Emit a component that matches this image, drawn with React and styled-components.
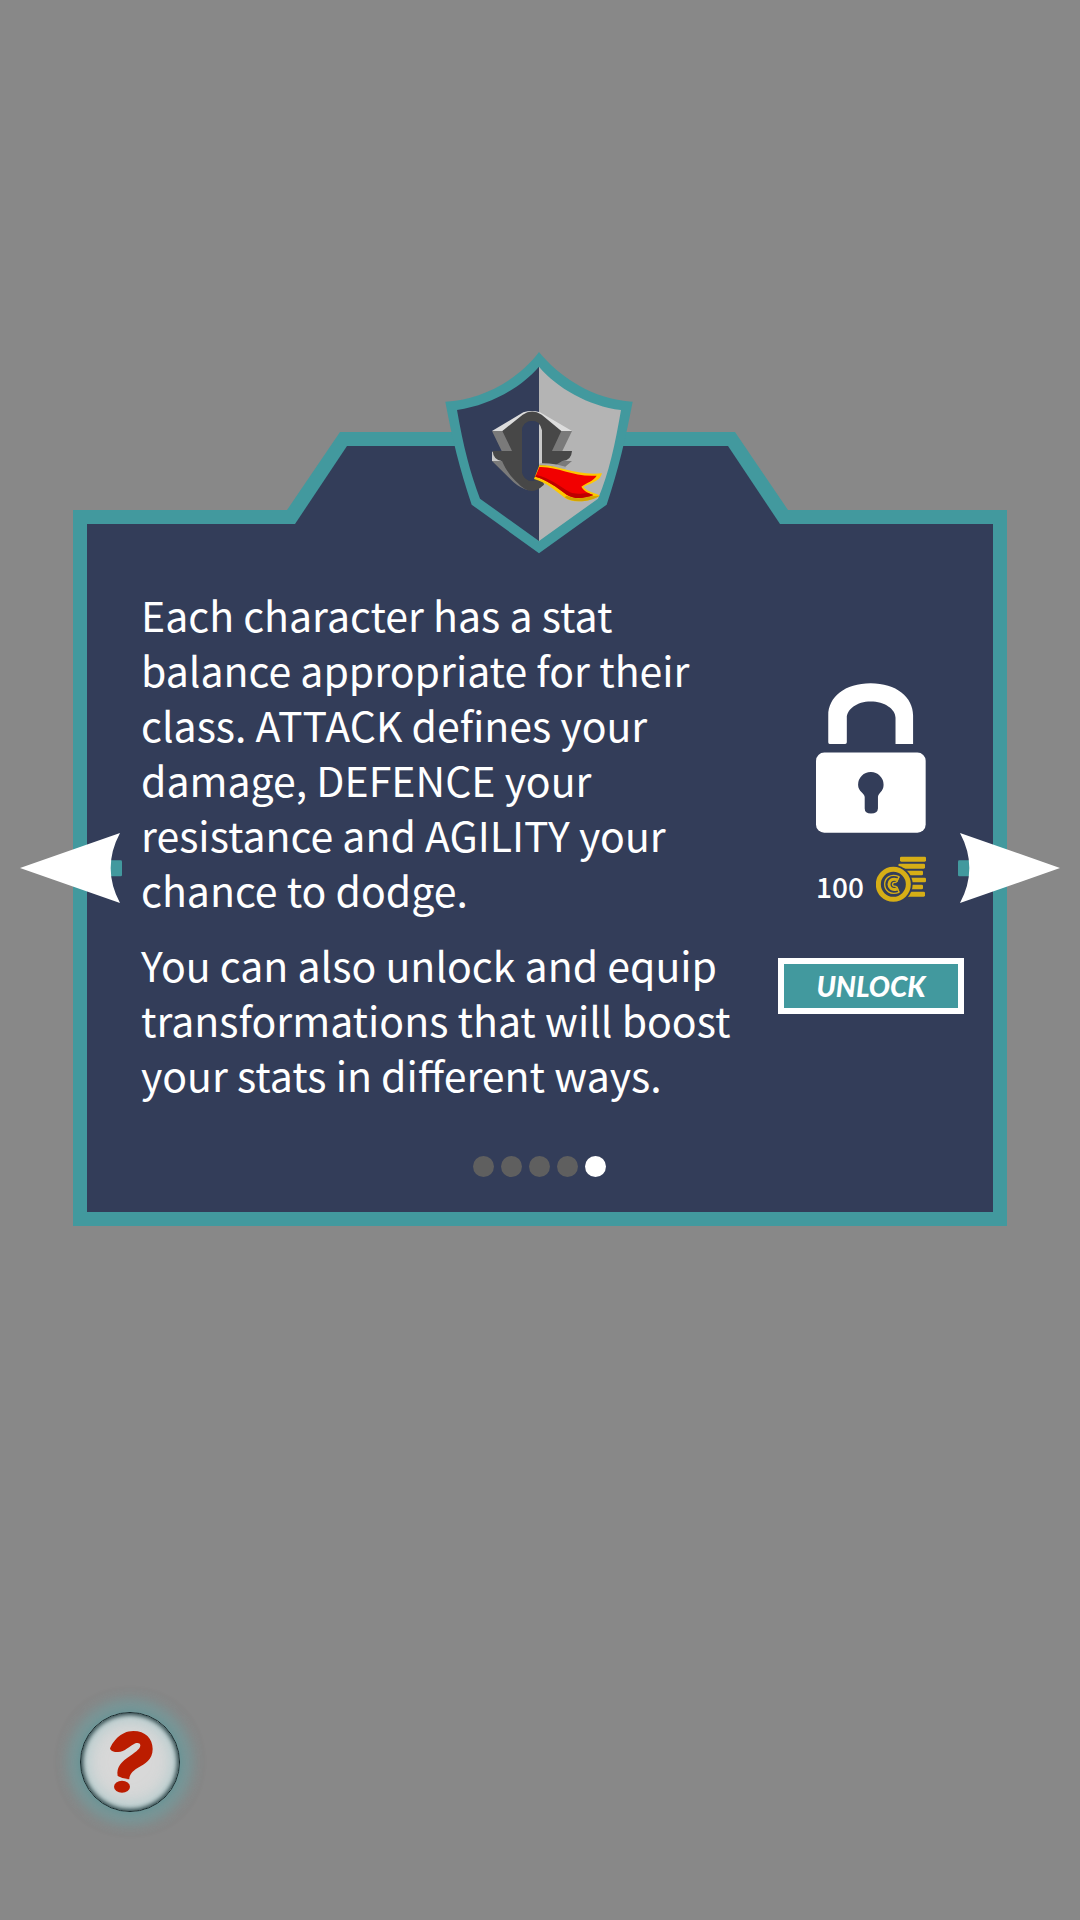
import React from "react";
import styled, { createGlobalStyle } from "styled-components";

const teal = "#42999e";
const navy = "#333d59";
const gold = "#d6ae16";

const GlobalStyle = createGlobalStyle`
  *, *::before, *::after { box-sizing: border-box; }
  body {
    margin: 0;
    background: #888888;
    color: #ffffff;
    font-family: "Noto Sans CJK SC", "Open Sans", sans-serif;
  }
  button {
    padding: 0;
    border: 0;
    background: none;
    color: inherit;
    cursor: pointer;
  }
  svg { display: block; }
`;

const Page = styled.div`
  display: flex;
  flex-direction: column;
  min-height: 100vh;
  padding: 432px 73px 108px;
`;

const Dialog = styled.main`
  display: flex;
  flex-direction: column;
  align-items: center;
`;

const Tab = styled.header`
  position: relative;
  z-index: 1;
  display: grid;
  width: 506px;
  max-width: 100%;
  height: 92px;
  margin-bottom: -14px;
`;

const TabEdge = styled.div`
  grid-area: 1 / 1;
  background: ${teal};
  clip-path: polygon(53px 0, calc(100% - 58px) 0, calc(100% - 5px) 78px, calc(100% - 5px) 100%, 0 100%, 0 78px);
`;

const TabFill = styled.div`
  grid-area: 1 / 1;
  background: ${navy};
  clip-path: polygon(60px 14px, calc(100% - 65px) 14px, calc(100% - 13px) 100%, 8px 100%);
`;

const Shield = styled.svg`
  position: absolute;
  top: -92px;
  left: 50%;
  width: 220px;
  height: 220px;
  transform: translateX(-50%);
`;

const Panel = styled.section`
  position: relative;
  display: flex;
  flex-direction: column;
  gap: 54px;
  width: 100%;
  padding: 63px 29px 35px 54px;
  border: 14px solid ${teal};
  background: ${navy};
`;

const Content = styled.div`
  display: grid;
  grid-template-columns: 1fr 186px;
  gap: 34px;
  align-items: start;
`;

const Copy = styled.div`
  display: flex;
  flex-direction: column;
  gap: 20px;
  font-size: 41px;
  line-height: 55px;
`;

const Paragraph = styled.p`
  margin: 0;
`;

const Offer = styled.aside`
  display: flex;
  flex-direction: column;
  align-items: center;
  padding-top: 96px;
`;

const Price = styled.div`
  display: flex;
  align-items: flex-end;
  gap: 12px;
  height: 46px;
  margin: 23px 0 56px;
  font-size: 28px;
  line-height: 32px;
  font-weight: 500;
`;

const UnlockButton = styled.button`
  width: 100%;
  height: 56px;
  border: 6px solid #ffffff;
  background: ${teal};
  font: italic 900 28px/44px Lato, sans-serif;
`;

const Dots = styled.nav`
  display: flex;
  justify-content: center;
  gap: 7px;
  padding-right: 27px;
`;

const Dot = styled.button`
  width: 21px;
  height: 21px;
  border-radius: 50%;
  background: ${(p) => (p.$active ? "#ffffff" : "#5f5f5f")};
`;

const ArrowButton = styled.button`
  position: absolute;
  top: 50%;
  ${(p) => (p.$next ? "right: -67px;" : "left: -67px;")}
  transform: translateY(-50%) ${(p) => (p.$next ? "scaleX(-1)" : "")};
`;

const Footer = styled.footer`
  display: flex;
  margin-top: auto;
  padding-left: 7px;
`;

const HelpButton = styled.button`
  display: grid;
  place-items: center;
  width: 100px;
  height: 100px;
  border: 1px solid #14282b;
  border-radius: 50%;
  background: #d8d8d8;
  box-shadow:
    0 0 12px 13px rgba(145, 160, 160, 0.5),
    0 0 14px 9px rgba(66, 145, 150, 0.75),
    0 0 5px 1px rgba(30, 90, 94, 0.6),
    inset 0 0 4px 2px rgba(16, 40, 44, 0.8),
    inset 0 0 18px 5px rgba(140, 190, 194, 0.6);
`;

function ShieldEmblem() {
  return (
    <Shield viewBox="0 0 660 660" aria-hidden="true">
      <path fill={teal} d="M327 36C385 107 485 178 608 185C588 290 565 390 530 494L327 640L125 494C90 390 65 290 46 185C150 180 260 125 327 36Z" />
      <path fill={navy} d="M327 80C272 143 182 196 81 210C100 320 121 400 150 476L327 603Z" />
      <path fill="#b4b4b4" d="M327 80C380 143 475 198 573 210C556 310 537 400 504 476L327 603Z" />
      <path fill="#dddddd" d="M186 273L280 217Q305 209 330 217L426 273H392L306 225L219 273Z" />
      <path fill="#7a7a7a" d="M186 273H222L258 333H215Z M426 273H390L355 333H397Z" />
      <path fill="#c9c9c9" d="M186 334V363H215Z" />
      <path fill="#7a7a7a" d="M186 363H222L296 451Q270 444 250 426Z M426 363H395L372 375L405 381Z" />
      <path fill="#c9c9c9" d="M326 246Q335 255 336 271V372H326Z" />
      <path fill="#474747" fillRule="evenodd" d="M217 273L278 224Q306 205 335 224L394 273L366 333H426Q424 362 397 363L372 378L340 425L342 434Q320 454 304 453Q282 451 264 430C245 412 230 395 216 363Q190 360 188 333H246ZM276 273V395Q280 420 306 423Q318 423 328 413V378L336 372V271Q331 244 306 243Q278 244 276 273Z" />
      <path fill={navy} d="M276 273Q278 244 306 243Q318 243 327 250V414Q318 423 306 423Q280 420 276 395Z" />
      <path fill="#aaaaaa" d="M329 370Q370 368 410 382L404 388Q360 378 329 376Z" />
      <path fill="#ffc800" d="M328 376C385 373 430 407 516 400C510 425 480 430 460 441C475 458 495 457 509 467C485 484 430 492 404 473C370 448 350 427 312 417Z" />
      <path fill="#d3a400" d="M404 472C430 492 485 484 509 467L478 469C450 478 430 475 410 467Z" />
      <path fill="#f20000" d="M328 381C385 379 430 412 500 407C491 423 471 427 454 440C463 456 478 460 490 465C465 474 437 480 410 464C378 440 350 419 316 410Z" />
      <path fill="#bd0000" d="M318 405C360 413 389 440 420 457C440 465 460 459 474 460L490 465C465 474 437 480 410 464C378 440 350 419 316 410Z" />
    </Shield>
  );
}

function Padlock() {
  return (
    <svg width="110" height="150" viewBox="168 68 332 451" aria-hidden="true">
      <path fill="#fff" d="M209 251Q205 251 205 246V165C205 110 255 68 333 68C410 68 461 110 461 165V251H408V172C408 146 375 123 333 123C291 123 261 147 261 172V246Q261 251 256 251Z" />
      <rect x="168" y="277" width="331" height="242" rx="25" fill="#fff" />
      <path fill={navy} d="M333 336A38 38 0 0 1 372 374C372 395 355 400 355 411V446Q354 461 334 461Q315 461 315 446V411C315 400 295 395 295 374A38 38 0 0 1 333 336Z" />
    </svg>
  );
}

function Coins() {
  return (
    <svg width="50" height="46" viewBox="348 589 150 138" aria-hidden="true">
      <g fill={gold}>
        <rect x="420" y="591" width="78" height="15" rx="4" />
        <rect x="415" y="612" width="80" height="15" rx="4" />
        <rect x="420" y="633" width="69" height="14" rx="4" />
        <rect x="440" y="654" width="58" height="14" rx="4" />
        <rect x="440" y="675" width="49" height="14" rx="4" />
        <rect x="430" y="696" width="65" height="15" rx="4" />
      </g>
      <circle cx="400" cy="674" r="58" fill={navy} />
      <circle cx="400" cy="674" r="45" fill="none" stroke={gold} strokeWidth="15" />
      <path fill="none" stroke={gold} strokeWidth="4" strokeLinejoin="round" d="M417 651C390 640 374 656 374 674C374 692 390 708 417 698L411 683Q407 674 411 665Z" />
      <path fill={navy} d="M400 667H424V681H400Z" />
      <path fill="none" stroke={gold} strokeWidth="9" d="M411 660C394 655 387 665 387 674C387 683 394 693 411 688" />
      <path fill="none" stroke={gold} strokeWidth="4" d="M417 651L411 665Q409 669 400 669Q395 674 400 679Q409 679 411 683L417 698" />
    </svg>
  );
}

function Arrow() {
  return (
    <svg width="102" height="70" viewBox="60 99 306 210" aria-hidden="true">
      <path fill={teal} d="M325 181H362Q366 181 366 185V225Q366 229 362 229H325Z" />
      <path fill="#fff" d="M60 204L360 99Q304 204 360 309Z" />
    </svg>
  );
}

function QuestionMark() {
  return (
    <svg width="46" height="62" viewBox="171 153 138 186" aria-hidden="true">
      <path fill="#bb1c00" d="M180 206C187 188 210 153 250 153C286 153 308 176 308 207C308 240 284 252 264 263C246 274 238 284 238 298Q218 297 203 288C198 260 216 244 240 228C262 213 271 205 271 196C271 189 264 187 256 190C238 198 225 216 204 216Q184 216 180 206Z" />
      <ellipse cx="216" cy="320" rx="24" ry="18" fill="#bb1c00" />
    </svg>
  );
}

export default function App() {
  const pages = [1, 2, 3, 4, 5];
  return (
    <>
      <GlobalStyle />
      <Page>
        <Dialog>
          <Tab>
            <TabEdge />
            <TabFill />
            <ShieldEmblem />
          </Tab>
          <Panel>
            <Content>
              <Copy>
                <Paragraph>
                  Each character has a stat balance appropriate for their class. ATTACK defines your
                  damage, DEFENCE your resistance and AGILITY your chance to dodge.
                </Paragraph>
                <Paragraph>
                  You can also unlock and equip transformations that will boost your stats in
                  different ways.
                </Paragraph>
              </Copy>
              <Offer>
                <Padlock />
                <Price>
                  <span>100</span>
                  <Coins />
                </Price>
                <UnlockButton type="button">UNLOCK</UnlockButton>
              </Offer>
            </Content>
            <Dots aria-label="Pages">
              {pages.map((n) => (
                <Dot key={n} type="button" $active={n === 5} aria-label={`Page ${n}`} />
              ))}
            </Dots>
            <ArrowButton type="button" aria-label="Previous">
              <Arrow />
            </ArrowButton>
            <ArrowButton type="button" $next aria-label="Next">
              <Arrow />
            </ArrowButton>
          </Panel>
        </Dialog>
        <Footer>
          <HelpButton type="button" aria-label="Help">
            <QuestionMark />
          </HelpButton>
        </Footer>
      </Page>
    </>
  );
}
